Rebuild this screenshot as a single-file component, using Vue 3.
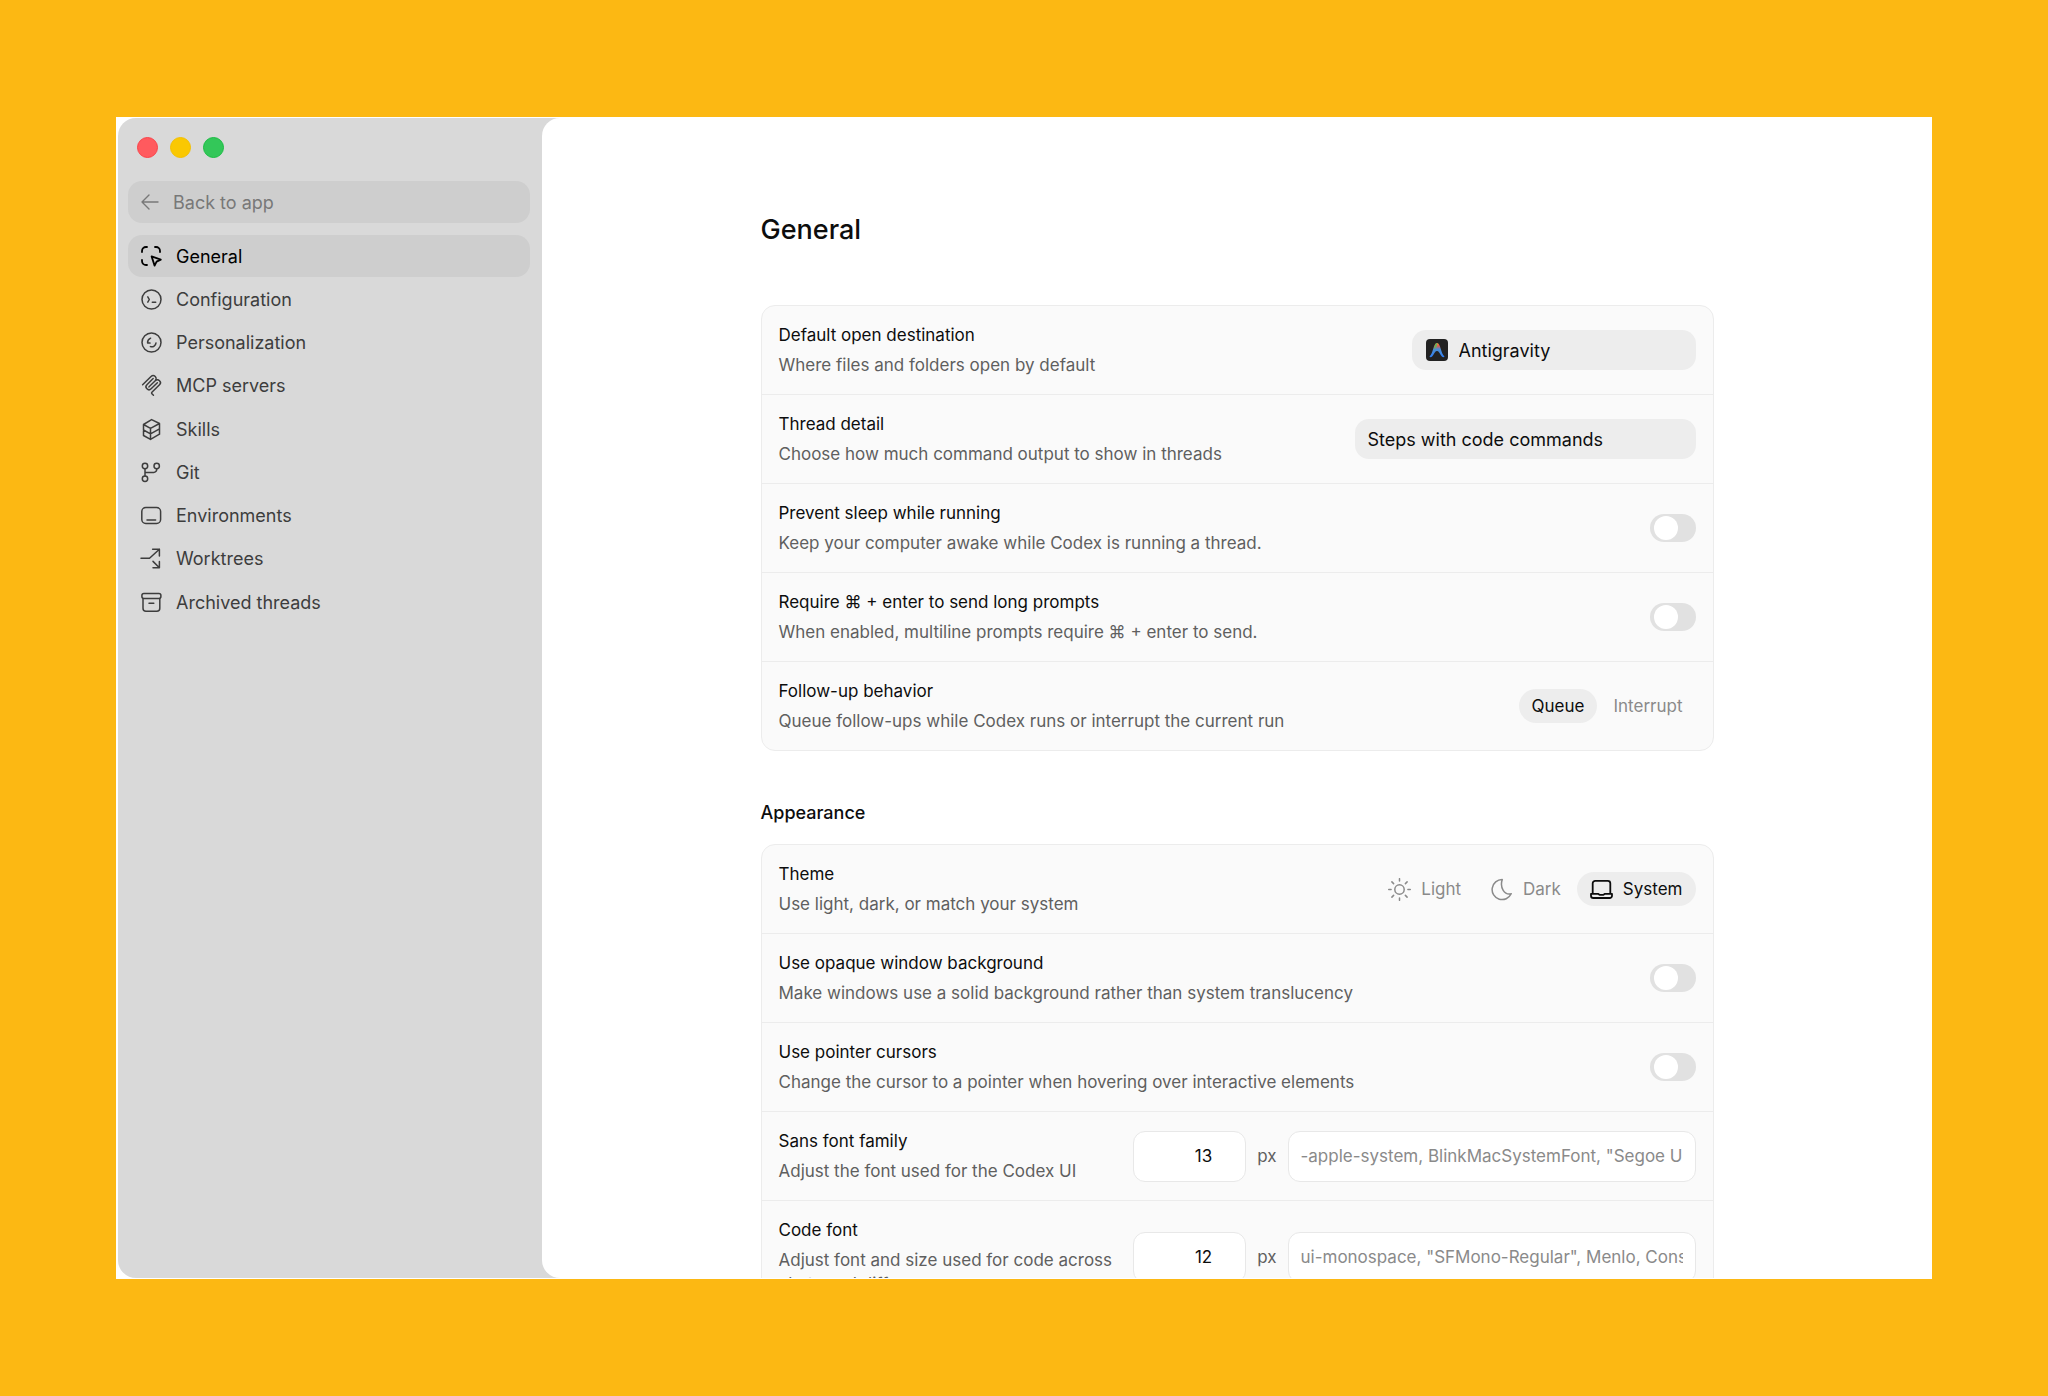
<script setup>
import { ref } from 'vue'

const nav = [
  {
    label: 'General',
    icon: '<path d="M1 6V5a4 4 0 0 1 4-4h1M14 1h1a4 4 0 0 1 4 4v1M1 14v1a4 4 0 0 0 4 4h1"/><path d="M10.600 10.400 19.800 13.600 15.600 15.600 13.600 19.600z"/>',
    bold: true,
  },
  {
    label: 'Configuration',
    icon: '<circle cx="10.500" cy="10.500" r="9.500"/><path d="M6.800 7.800 8.300 10.500 6.800 13.200M11.300 13.200h3.400"/>',
  },
  {
    label: 'Personalization',
    icon: '<circle cx="10.500" cy="10.500" r="9.500"/><path d="M9.600 6.200C7.600 7.200 6.400 8.800 6.600 10.900l2.400.2M9.400 14.600c2.800.8 5.300-.9 5.600-3.700"/>',
  },
  {
    label: 'MCP servers',
    box: '0 0 24 24',
    icon: '<g fill="currentColor" stroke="none"><path d="M15.688 2.343a2.588 2.588 0 00-3.610 0l-9.626 9.440a.863.863 0 01-1.203 0 .823.823 0 010-1.180l9.626-9.440a4.313 4.313 0 016.016 0 4.116 4.116 0 011.204 3.540 4.300 4.300 0 013.609 1.180l.05.05a4.115 4.115 0 010 5.900l-8.706 8.537a.274.274 0 000 .393l1.788 1.754a.823.823 0 010 1.180.863.863 0 01-1.203 0l-1.788-1.753a1.920 1.920 0 010-2.754l8.706-8.538a2.470 2.470 0 000-3.540l-.05-.049a2.588 2.588 0 00-3.607-.003l-7.172 7.034-.002.002-.098.097a.863.863 0 01-1.204 0 .823.823 0 010-1.180l7.273-7.133a2.470 2.470 0 00-.003-3.537z"/><path d="M14.485 4.703a.823.823 0 000-1.180.863.863 0 00-1.204 0l-7.119 6.982a4.115 4.115 0 000 5.900 4.314 4.314 0 006.016 0l7.120-6.982a.823.823 0 000-1.180.863.863 0 00-1.204 0l-7.119 6.982a2.588 2.588 0 01-3.610 0 2.470 2.470 0 010-3.540l7.120-6.982z"/></g>',
  },
  {
    label: 'Skills',
    icon: '<path d="M2.500 5.500 10.600.6 18.500 4.500V15.200L9.500 20.400 2.500 16.500zM2.500 5.500 9.500 9.300 18.500 4.500M9.500 9.300V20.400M2.500 11 9.500 14.800 18.500 9.900"/>',
  },
  {
    label: 'Git',
    icon: '<circle cx="4" cy="4" r="2.700"/><circle cx="15.700" cy="4" r="2.700"/><circle cx="4" cy="16.800" r="2.700"/><path d="M4 6.700v7.400M4 10.400h8.700a3 3 0 0 0 3-3v-.7"/>',
  },
  {
    label: 'Environments',
    icon: '<rect x=".8" y="2.500" width="18.800" height="16" rx="4"/><path d="M6 14.900h8.600"/>',
  },
  {
    label: 'Worktrees',
    icon: '<path d="M0 10.300h8.500L18.400 1.200M11.600 1.200h6.800v6.800M12 13.400l6.400 6.400M18.400 13.400v6.400h-6.400"/>',
  },
  {
    label: 'Archived threads',
    icon: '<rect x=".9" y="1.600" width="19" height="5" rx="2"/><path d="M2 6.600v9.700a3 3 0 0 0 3 3h10.800a3 3 0 0 0 3-3V6.600M8 11.300h4.800"/>',
  },
]

const themes = [
  {
    value: 'Light',
    icon: '<circle cx="11.500" cy="11.500" r="4.700"/><path d="M11.500.7v2.400M11.500 19.900v2.400M.7 11.500h2.400M19.900 11.500h2.400M3.900 3.900 5.600 5.600M17.400 17.400l1.700 1.700M3.900 19.100l1.700-1.700M17.400 5.600l1.700-1.700"/>',
  },
  {
    value: 'Dark',
    icon: '<path d="M12.300 1.600A10 10 0 1 0 21.200 15.800C14.500 17.500 9.500 9.500 12.300 1.600z"/>',
  },
  {
    value: 'System',
    icon: '<path d="M2.700 15.800V5.300a2.500 2.500 0 0 1 2.500-2.500h12.600a2.500 2.500 0 0 1 2.500 2.500v10.500M1 15.800h7l1.500 1h4l1.500-1h7v1.900a2.300 2.300 0 0 1-2.300 2.300H3.300A2.300 2.300 0 0 1 1 17.700z"/>',
  },
]

const current = ref('General')
const destination = ref('Antigravity')
const detail = ref('Steps with code commands')
const followUp = ref('Queue')
const theme = ref('System')
const switches = ref({ sleep: false, enter: false, opaque: false, pointer: false })

const generalSwitches = [
  { key: 'sleep', title: 'Prevent sleep while running', text: 'Keep your computer awake while Codex is running a thread.' },
  { key: 'enter', title: 'Require ⌘ + enter to send long prompts', text: 'When enabled, multiline prompts require ⌘ + enter to send.' },
]
const appearanceSwitches = [
  { key: 'opaque', title: 'Use opaque window background', text: 'Make windows use a solid background rather than system translucency' },
  { key: 'pointer', title: 'Use pointer cursors', text: 'Change the cursor to a pointer when hovering over interactive elements' },
]
const fonts = ref([
  { key: 'sans', title: 'Sans font family', text: 'Adjust the font used for the Codex UI', size: 13, hint: '-apple-system, BlinkMacSystemFont, "Segoe UI", sans-serif' },
  { key: 'code', title: 'Code font', text: 'Adjust font and size used for code across chats and diffs', size: 12, hint: 'ui-monospace, "SFMono-Regular", Menlo, Consolas, monospace' },
])
</script>

<template>
  <div class="backdrop">
    <div class="window">
      <div class="shell">
        <aside class="sidebar">
          <div class="lights">
            <span class="light red"></span>
            <span class="light yellow"></span>
            <span class="light green"></span>
          </div>
          <button class="back" type="button">
            <svg viewBox="0 0 18 18" class="arrow"><path d="M17 9H1M8 2 1 9l7 7" /></svg>
            Back to app
          </button>
          <nav class="nav">
            <a
              v-for="item in nav"
              :key="item.label"
              href="#"
              class="item"
              :class="{ active: current === item.label }"
              @click.prevent="current = item.label"
            >
              <svg :viewBox="item.box || '0 0 21 21'" class="icon" :class="{ strong: item.bold }" v-html="item.icon"></svg>
              {{ item.label }}
            </a>
          </nav>
        </aside>

        <main class="main">
          <div class="content">
            <h1>General</h1>

            <section class="card">
              <div class="row">
                <div class="copy">
                  <label class="title" for="destination">Default open destination</label>
                  <p>Where files and folders open by default</p>
                </div>
                <div class="picker">
                  <svg class="app-icon" viewBox="0 0 22 22">
                    <defs>
                      <linearGradient id="arc" x1="0" y1="0" x2="0" y2="1">
                        <stop offset="0" stop-color="#e8a23c" />
                        <stop offset=".2" stop-color="#e0574e" />
                        <stop offset=".42" stop-color="#4c8fd0" />
                        <stop offset="1" stop-color="#2f7df6" />
                      </linearGradient>
                    </defs>
                    <rect width="22" height="22" rx="4" fill="#222" />
                    <path d="M3.500 17.600C7.300 14.500 7.200 4 11 4s3.700 10.500 7.500 13.600c-.9 1.300-2.500.4-3.600-1.300C13.300 13.800 12.700 12 11 12s-2.300 1.800-3.900 4.300c-1.100 1.700-2.700 2.600-3.600 1.300z" fill="url(#arc)" />
                    <path d="M8.200 8.500C9 5.500 9.800 4.200 11 4v3.500c-1 .2-1.600 1.500-2.300 3z" fill="#63b35c" />
                  </svg>
                  <select id="destination" v-model="destination" class="select with-icon">
                    <option>Antigravity</option>
                  </select>
                </div>
              </div>
              <div class="row">
                <div class="copy">
                  <label class="title" for="detail">Thread detail</label>
                  <p>Choose how much command output to show in threads</p>
                </div>
                <select id="detail" v-model="detail" class="select wide">
                  <option>Steps with code commands</option>
                </select>
              </div>
              <div v-for="s in generalSwitches" :key="s.key" class="row">
                <div class="copy">
                  <label class="title" :for="s.key">{{ s.title }}</label>
                  <p>{{ s.text }}</p>
                </div>
                <input :id="s.key" v-model="switches[s.key]" type="checkbox" role="switch" class="switch" />
              </div>
              <div class="row">
                <div class="copy">
                  <span class="title">Follow-up behavior</span>
                  <p>Queue follow-ups while Codex runs or interrupt the current run</p>
                </div>
                <div class="segments">
                  <button
                    v-for="f in ['Queue', 'Interrupt']"
                    :key="f"
                    type="button"
                    class="segment"
                    :class="{ on: followUp === f }"
                    @click="followUp = f"
                  >{{ f }}</button>
                </div>
              </div>
            </section>

            <h2>Appearance</h2>

            <section class="card">
              <div class="row">
                <div class="copy">
                  <span class="title">Theme</span>
                  <p>Use light, dark, or match your system</p>
                </div>
                <div class="segments">
                  <button
                    v-for="t in themes"
                    :key="t.value"
                    type="button"
                    class="segment"
                    :class="{ on: theme === t.value }"
                    @click="theme = t.value"
                  >
                    <svg viewBox="0 0 23 23" class="glyph" v-html="t.icon"></svg>
                    {{ t.value }}
                  </button>
                </div>
              </div>
              <div v-for="s in appearanceSwitches" :key="s.key" class="row">
                <div class="copy">
                  <label class="title" :for="s.key">{{ s.title }}</label>
                  <p>{{ s.text }}</p>
                </div>
                <input :id="s.key" v-model="switches[s.key]" type="checkbox" role="switch" class="switch" />
              </div>
              <div v-for="f in fonts" :key="f.key" class="row">
                <div class="copy">
                  <label class="title" :for="f.key">{{ f.title }}</label>
                  <p>{{ f.text }}</p>
                </div>
                <div class="font-fields">
                  <input :id="f.key + '-size'" v-model="f.size" type="number" class="field size" />
                  <label :for="f.key + '-size'" class="unit">px</label>
                  <input :id="f.key" type="text" class="field family" :placeholder="f.hint" />
                </div>
              </div>
            </section>
          </div>
        </main>
      </div>
    </div>
  </div>
</template>

<style>
body {
  margin: 0;
}
</style>

<style scoped>
.backdrop {
  box-sizing: border-box;
  height: 100vh;
  padding: 117px 116px;
  background: #fcb813;
  font-family: Inter, "Liberation Sans", sans-serif;
  color: #0d0d0d;
}
button,
input,
select {
  font-family: inherit;
}
.window {
  box-sizing: border-box;
  height: 100%;
  padding: 1px 0 1px 2px;
  background: #fff;
  overflow: hidden;
}
.shell {
  display: flex;
  height: 100%;
  background: #d9d9d9;
  border-radius: 18px 0 0 18px;
  overflow: hidden;
}
.sidebar {
  box-sizing: border-box;
  flex: none;
  width: 424px;
  padding: 19px 12px 0 10px;
}
.lights {
  display: flex;
  gap: 12px;
  padding-left: 9px;
}
.light {
  box-sizing: border-box;
  width: 21px;
  height: 21px;
  border-radius: 50%;
}
.red {
  background: #ff5a5e;
  border: 1px solid #fb4248;
}
.yellow {
  background: #fac802;
  border: 1px solid #f4c000;
}
.green {
  background: #33c759;
  border: 1px solid #19bd42;
}
.back,
.item {
  box-sizing: border-box;
  display: flex;
  align-items: center;
  width: 100%;
  height: 42px;
  padding: 0 13px;
  border: 0;
  border-radius: 14px;
  font-size: 18px;
  text-decoration: none;
}
.back {
  gap: 14px;
  margin: 23px 0 12px;
  background: #cecece;
  color: #787878;
}
.arrow {
  width: 18px;
  height: 18px;
  fill: none;
  stroke: currentColor;
  stroke-width: 1.4;
  stroke-linecap: round;
  stroke-linejoin: round;
}
.nav {
  display: flex;
  flex-direction: column;
  justify-content: space-between;
  min-height: 388px;
}
.item {
  gap: 14px;
  color: #3d3d3d;
}
.item.active {
  background: #cecece;
  color: #000;
}
.icon {
  flex: none;
  width: 21px;
  height: 21px;
  fill: none;
  stroke: currentColor;
  stroke-width: 1.5;
  stroke-linecap: round;
  stroke-linejoin: round;
  overflow: visible;
}
.icon.strong {
  stroke-width: 1.8;
}
.main {
  flex: 1;
  min-width: 0;
  padding: 0 48px;
  background: #fff;
  border-radius: 18px 0 0 18px;
  overflow: hidden;
}
.content {
  max-width: 953px;
  margin: 0 auto;
}
h1 {
  margin: 0;
  padding: 94px 0 57px;
  font-size: 27px;
  line-height: 36px;
  font-weight: 500;
}
h2 {
  margin: 0;
  padding: 50px 0 19px;
  font-size: 18px;
  line-height: 24px;
  font-weight: 500;
}
.card {
  background: #fafafa;
  border: 1px solid #ececec;
  border-radius: 14px;
}
.row {
  display: flex;
  align-items: center;
  justify-content: space-between;
  gap: 16px;
  padding: 17px;
}
.row + .row {
  border-top: 1px solid #ececec;
}
.copy {
  flex: 1;
  min-width: 0;
  font-size: 17px;
  line-height: 24px;
}
.title {
  display: block;
}
.copy p {
  margin: 6px 0 0;
  color: #5f5f5f;
}
.picker,
.select,
.switch,
.segments,
.font-fields {
  flex: none;
  margin-top: -6px;
  margin-bottom: -6px;
}
.picker {
  position: relative;
}
.app-icon {
  position: absolute;
  top: 9px;
  left: 14px;
  width: 22px;
  height: 22px;
}
.select {
  appearance: none;
  display: block;
  height: 40px;
  padding: 0 13px;
  border: 0;
  border-radius: 14px;
  background: #ededed;
  color: #0d0d0d;
  font-size: 18px;
}
.picker .select {
  width: 284px;
  margin: 0;
  padding-left: 47px;
}
.select.wide {
  width: 341px;
}
.switch {
  appearance: none;
  display: flex;
  align-items: center;
  box-sizing: border-box;
  width: 46px;
  height: 28px;
  margin-left: 0;
  margin-right: 0;
  padding: 0 4px;
  border-radius: 14px;
  background: #e1e1e1;
}
.switch::before {
  content: "";
  width: 24px;
  height: 24px;
  border-radius: 50%;
  background: #fff;
}
.switch:checked {
  justify-content: flex-end;
  background: #339cff;
}
.segments {
  display: flex;
  gap: 3px;
}
.segment {
  display: flex;
  align-items: center;
  gap: 10px;
  height: 34px;
  padding: 0 13px;
  border: 0;
  border-radius: 17px;
  background: transparent;
  color: #8a8a8a;
  font-size: 17px;
}
.segment.on {
  background: #ededed;
  color: #0d0d0d;
}
.glyph {
  width: 23px;
  height: 23px;
  fill: none;
  stroke: currentColor;
  stroke-width: 1.5;
  stroke-linecap: round;
  stroke-linejoin: round;
}
.on .glyph {
  stroke-width: 1.8;
}
.font-fields {
  display: flex;
  align-items: center;
  gap: 11px;
}
.field {
  box-sizing: border-box;
  height: 51px;
  padding: 0 12px;
  border: 1px solid #e8e8e8;
  border-radius: 12px;
  background: #fff;
  color: #0d0d0d;
  font-size: 17px;
}
.size {
  appearance: textfield;
  width: 113px;
  padding-right: 33px;
  text-align: right;
}
.size::-webkit-inner-spin-button {
  display: none;
}
.unit {
  color: #5f5f5f;
  font-size: 17px;
}
.family {
  width: 408px;
}
.family::placeholder {
  color: #8a8a8a;
}
</style>
